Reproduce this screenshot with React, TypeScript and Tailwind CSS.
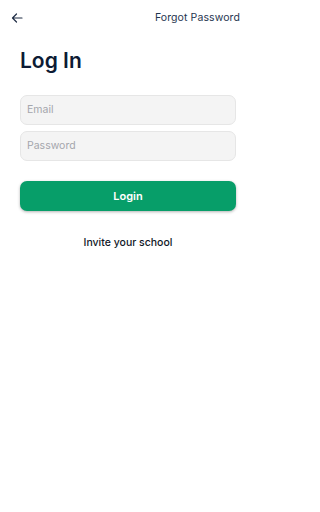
import React from "react";

export default function App() {
  return (
    <div className="w-full min-h-[512px] bg-white font-['Inter',sans-serif] flex flex-col">
      <div className="w-[256px] flex flex-col">
        <div className="flex items-center justify-between pl-[11px] pr-[16px] pt-[9px] h-[26px]">
          <svg width="12" height="12" viewBox="0 0 12 12" fill="none" stroke="#1f2d45" strokeWidth="1.2" strokeLinecap="round" strokeLinejoin="round">
            <path d="M11 6H1.5M5.5 2L1.5 6l4 4" />
          </svg>
          <span className="text-[10.5px] text-[#1f3550] tracking-[0.1px]">Forgot Password</span>
        </div>
        <div className="px-[20px] pt-[22px]">
          <h1 className="text-[21px] leading-[26px] font-semibold text-[#0d1b34]">Log In</h1>
        </div>
        <div className="px-[20px] pt-[21px] flex flex-col gap-[6px]">
          <div className="h-[30px] rounded-[7px] bg-[#f4f4f4] border border-[#e6e6e6] flex items-center px-[6px] text-[10.5px] text-[#a4a6ac]">Email</div>
          <div className="h-[30px] rounded-[7px] bg-[#f4f4f4] border border-[#e6e6e6] flex items-center px-[6px] text-[10.5px] text-[#a4a6ac]">Password</div>
        </div>
        <div className="px-[20px] pt-[20px]">
          <div className="h-[30px] rounded-[7px] bg-[#079e69] shadow-[0_1px_3px_rgba(0,0,0,0.3)] flex items-center justify-center text-[11px] font-semibold text-white">Login</div>
        </div>
        <div className="pt-[24px] flex justify-center text-[10.5px] font-medium text-[#111827]">Invite your school</div>
      </div>
    </div>
  );
}
